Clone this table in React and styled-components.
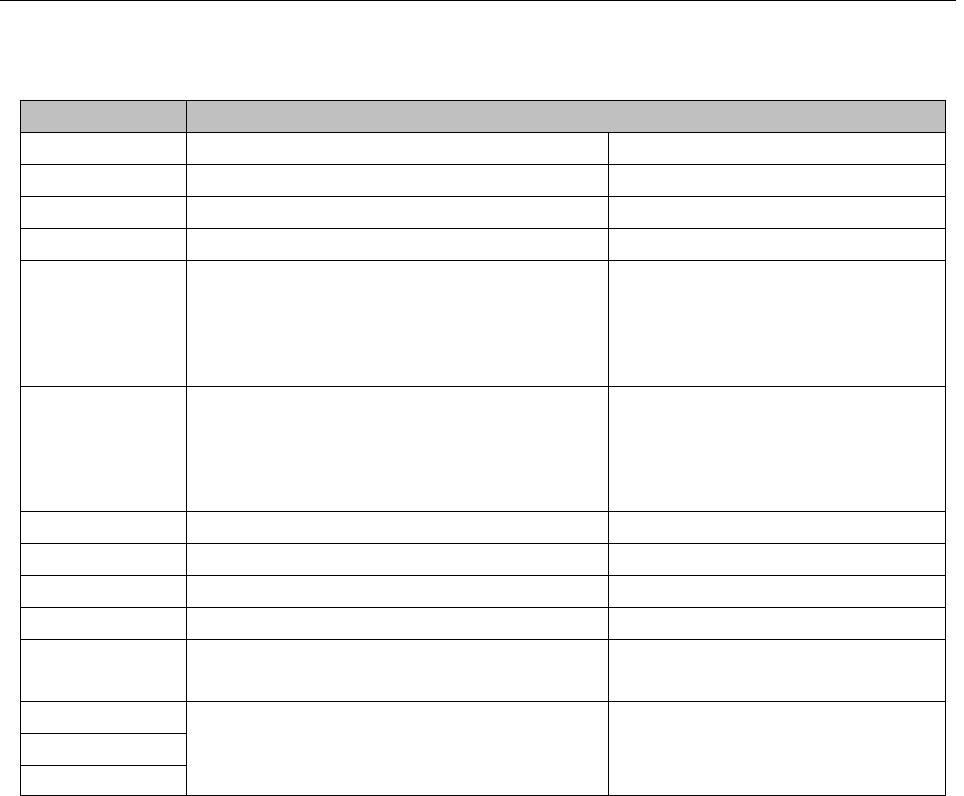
import React from "react";
import styled, { createGlobalStyle } from "styled-components";

const GlobalStyle = createGlobalStyle`
  body {
    margin: 0;
    background: #ffffff;
    font-family: "Liberation Sans", Arial, sans-serif;
  }
`;

const Page = styled.div`
  width: 964px;
  height: 796px;
  overflow: hidden;
`;

const Rule = styled.div`
  width: 956px;
  height: 1px;
  background: #000;
`;

const Sheet = styled.table`
  margin: 99px 0 0 20px;
  width: 925px;
  border-collapse: collapse;
  table-layout: fixed;
`;

const HeadCell = styled.th`
  height: ${({ $h }) => $h}px;
  padding: 0;
  background: #c0c0c0;
  border: 1px solid #000;
  font-size: 13px;
  font-weight: bold;
`;

const Cell = styled.td`
  height: ${({ $h }) => $h}px;
  padding: 0;
  border: 1px solid #000;
  font-size: 13px;
`;

const rows = [31, 31, 31, 31, 125, 124, 31, 31, 31, 31, 61];
const tail = [31, 31, 29];

export default function App() {
  return (
    <Page>
      <GlobalStyle />
      <Rule />
      <Sheet>
        <colgroup>
          <col style={{ width: 166 }} />
          <col style={{ width: 422 }} />
          <col style={{ width: 337 }} />
        </colgroup>
        <thead>
          <tr>
            <HeadCell $h={31}></HeadCell>
            <HeadCell $h={31} colSpan={2}></HeadCell>
          </tr>
        </thead>
        <tbody>
          {rows.map((h, i) => (
            <tr key={i}>
              <Cell $h={h}></Cell>
              <Cell $h={h}></Cell>
              <Cell $h={h}></Cell>
            </tr>
          ))}
          {tail.map((h, i) => (
            <tr key={"t" + i}>
              <Cell $h={h}></Cell>
              {i === 0 && <Cell rowSpan={3}></Cell>}
              {i === 0 && <Cell rowSpan={3}></Cell>}
            </tr>
          ))}
        </tbody>
      </Sheet>
    </Page>
  );
}
